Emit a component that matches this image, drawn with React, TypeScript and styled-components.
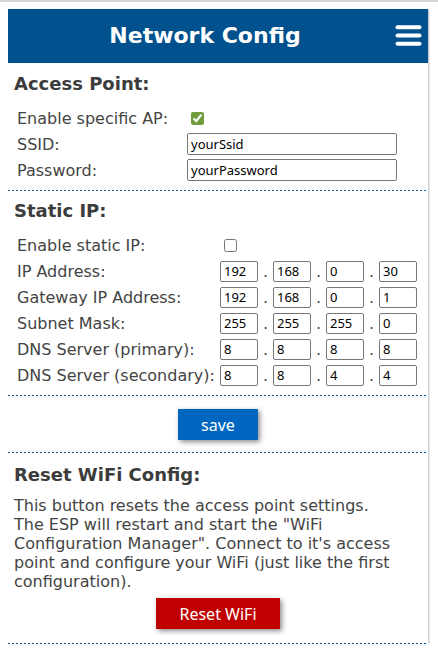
import React from "react";
import styled, { createGlobalStyle } from "styled-components";

const Global = createGlobalStyle`
  html { border-top: 2px solid #d4d4d4; background: #fff; }
  body {
    margin: 7px 8px 8px;
    font-family: "DejaVu Sans", Verdana, sans-serif;
    font-size: 16px;
    color: #444;
  }
`;

const Card = styled.div`
  width: 420px;
  background: #fff;
  box-shadow: 0 0 3px rgba(0, 0, 0, 0.5);
`;

const Header = styled.header`
  height: 54px;
  background: #01518f;
  display: flex;
  align-items: center;
`;

const Title = styled.h1`
  flex: 1;
  margin: 0;
  padding-left: 7px;
  text-align: center;
  color: #fff;
  font-size: 22px;
  line-height: 1;
  font-weight: bold;
`;

const MenuIcon = styled.svg`
  display: block;
  margin-right: 6px;
  flex: none;
`;

const Section = styled.section<{ $pt: number; $pb: number; $center?: boolean }>`
  padding: ${(p) => p.$pt}px 6px ${(p) => p.$pb + 1}px;
  background: repeating-linear-gradient(to right, #0d5494 0 2px, transparent 2px 4px) left bottom / 100% 1px no-repeat;
  ${(p) => (p.$center ? "display: flex; flex-direction: column; align-items: center;" : "")}
`;

const Heading = styled.h3`
  margin: 0 0 10px;
  font-size: 18px;
  line-height: 22px;
  font-weight: bold;
  color: #3c3c3c;
`;

const FormGrid = styled.div<{ $labelWidth: number }>`
  display: grid;
  grid-template-columns: ${(p) => p.$labelWidth}px 1fr;
  grid-auto-rows: 26px;
  padding-left: 3px;
`;

const Label = styled.div`
  display: flex;
  align-items: center;
  white-space: nowrap;
`;

const Value = styled.div`
  display: flex;
  align-items: center;
`;

const Check = styled.input`
  margin: 0 0 0 4px;
  width: 13px;
  height: 13px;
  accent-color: #6f9c3c;
`;

const TextInput = styled.input`
  box-sizing: border-box;
  width: 210px;
  height: 22px;
  border: 1px solid #767676;
  border-radius: 2px;
  padding: 0 3px;
  font-family: "Noto Sans", "Open Sans", sans-serif;
  font-size: 13px;
  color: #000;
  background: #fff;
`;

const OctetInput = styled(TextInput)`
  width: 38px;
  height: 21px;
`;

const Dot = styled.span`
  width: 15px;
  text-align: center;
`;

const ActionButton = styled.button<{ $color: string; $w: number }>`
  width: ${(p) => p.$w}px;
  height: 31px;
  border: none;
  border-radius: 0;
  background: ${(p) => p.$color};
  color: #fff;
  font-family: "Noto Sans", "Open Sans", sans-serif;
  font-size: 16px;
  box-shadow: 2px 2px 5px rgba(0, 0, 0, 0.45);
  cursor: pointer;
`;

const Paragraph = styled.p`
  margin: 0 0 7px;
  line-height: 19px;
  align-self: stretch;
`;

const IpRow = ({ label, values }: { label: string; values: string[] }) => (
  <>
    <Label>{label}</Label>
    <Value>
      {values.map((v, i) => (
        <React.Fragment key={i}>
          {i > 0 && <Dot>.</Dot>}
          <OctetInput defaultValue={v} />
        </React.Fragment>
      ))}
    </Value>
  </>
);

export default function App() {
  return (
    <>
      <Global />
      <Card>
        <Header>
          <Title>Network Config</Title>
          <MenuIcon width="27" height="22" viewBox="0 0 27 22">
            <g stroke="#fff" strokeWidth="4" strokeLinecap="round">
              <line x1="2.5" y1="2.2" x2="24.5" y2="2.2" />
              <line x1="2.5" y1="10.5" x2="24.5" y2="10.5" />
              <line x1="2.5" y1="18.8" x2="24.5" y2="18.8" />
            </g>
          </MenuIcon>
        </Header>

        <Section $pt={10} $pb={7}>
          <Heading>Access Point:</Heading>
          <FormGrid $labelWidth={170}>
            <Label>Enable specific AP:</Label>
            <Value>
              <Check type="checkbox" defaultChecked />
            </Value>
            <Label>SSID:</Label>
            <Value>
              <TextInput defaultValue="yourSsid" />
            </Value>
            <Label>Password:</Label>
            <Value>
              <TextInput defaultValue="yourPassword" />
            </Value>
          </FormGrid>
        </Section>

        <Section $pt={9} $pb={7}>
          <Heading>Static IP:</Heading>
          <FormGrid $labelWidth={203}>
            <Label>Enable static IP:</Label>
            <Value>
              <Check type="checkbox" />
            </Value>
            <IpRow label="IP Address:" values={["192", "168", "0", "30"]} />
            <IpRow label="Gateway IP Address:" values={["192", "168", "0", "1"]} />
            <IpRow label="Subnet Mask:" values={["255", "255", "255", "0"]} />
            <IpRow label="DNS Server (primary):" values={["8", "8", "8", "8"]} />
            <IpRow label="DNS Server (secondary):" values={["8", "8", "4", "4"]} />
          </FormGrid>
        </Section>

        <Section $pt={13} $pb={12} $center>
          <ActionButton $color="#0066bf" $w={80}>save</ActionButton>
        </Section>

        <Section $pt={11} $pb={14} $center>
          <Heading style={{ alignSelf: "stretch" }}>Reset WiFi Config:</Heading>
          <Paragraph>
            This button resets the access point settings.
            <br />
            The ESP will restart and start the "WiFi Configuration Manager". Connect to it's access
            point and configure your WiFi (just like the first configuration).
          </Paragraph>
          <ActionButton $color="#c00000" $w={124}>Reset WiFi</ActionButton>
        </Section>
      </Card>
    </>
  );
}
